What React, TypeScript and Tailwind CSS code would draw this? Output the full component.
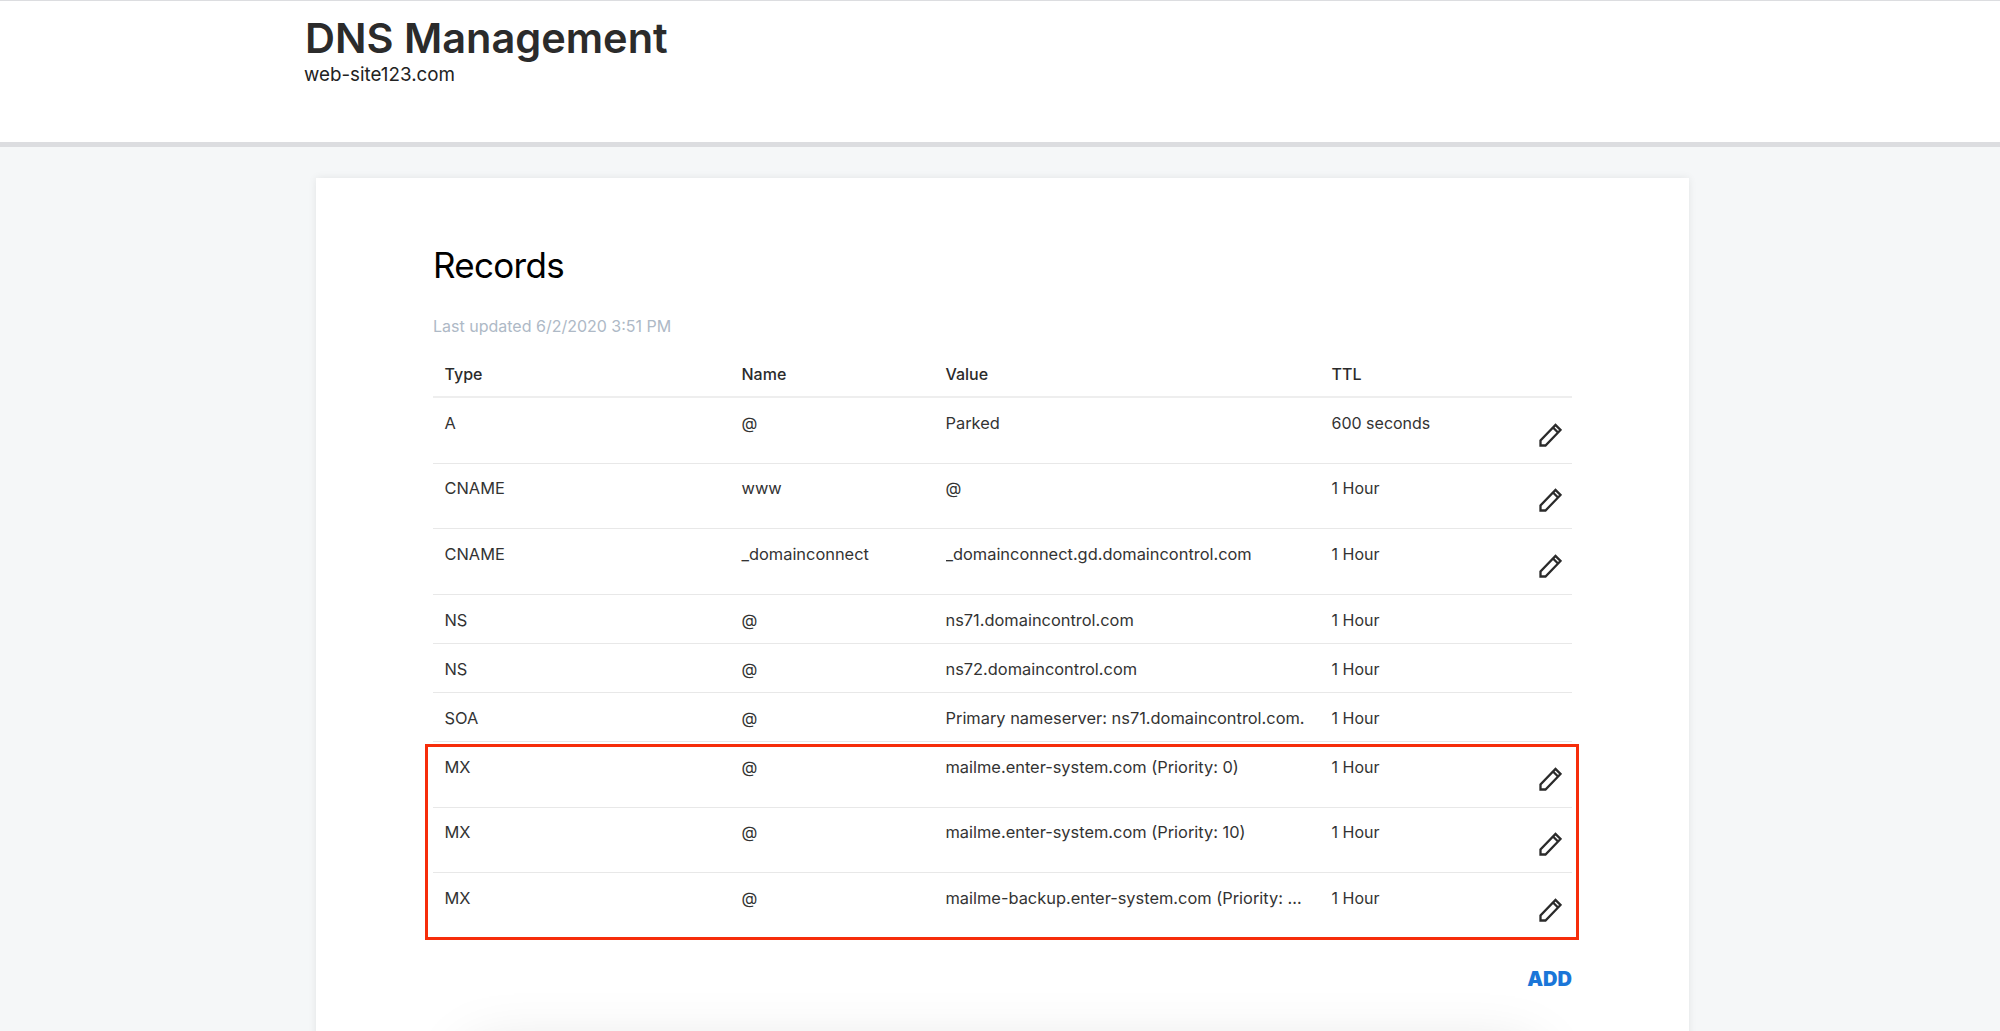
const font = "font-['Inter','Liberation_Sans',sans-serif]";

type Row = { type: string; name: string; value: string; ttl: string; edit?: boolean };

const topRows: Row[] = [
  { type: "A", name: "@", value: "Parked", ttl: "600 seconds", edit: true },
  { type: "CNAME", name: "www", value: "@", ttl: "1 Hour", edit: true },
  { type: "CNAME", name: "_domainconnect", value: "_domainconnect.gd.domaincontrol.com", ttl: "1 Hour", edit: true },
  { type: "NS", name: "@", value: "ns71.domaincontrol.com", ttl: "1 Hour" },
  { type: "NS", name: "@", value: "ns72.domaincontrol.com", ttl: "1 Hour" },
  { type: "SOA", name: "@", value: "Primary nameserver: ns71.domaincontrol.com.", ttl: "1 Hour" },
];

const mxRows: Row[] = [
  { type: "MX", name: "@", value: "mailme.enter-system.com (Priority: 0)", ttl: "1 Hour", edit: true },
  { type: "MX", name: "@", value: "mailme.enter-system.com (Priority: 10)", ttl: "1 Hour", edit: true },
  { type: "MX", name: "@", value: "mailme-backup.enter-system.com (Priority: 20)", ttl: "1 Hour", edit: true },
];

function Pencil() {
  return (
    <svg viewBox="0 0 24 24" className="w-6 h-6 text-[#2b2b2b]" fill="none" stroke="currentColor" strokeWidth="2.300" strokeLinejoin="miter">
      <path d="M2.500 22.500v-5L17.500 2l5 5L7.500 22.500z" />
      <path d="M15 4.500l5 5" />
    </svg>
  );
}

function RecordRow({ row }: { row: Row }) {
  return (
    <div
      className={`grid grid-cols-[297px_204px_386px_150px_1fr] pl-[11.500px] pt-[12.500px] border-b border-[#e8e8e8] text-[16.4px] leading-[24px] text-[#333] ${
        row.edit ? "h-[65.7px]" : "h-[49px]"
      }`}
    >
      <div>{row.type}</div>
      <div>{row.name}</div>
      <div className="pr-6 truncate">{row.value}</div>
      <div className="text-[16px]">{row.ttl}</div>
      {row.edit && (
        <div className="pt-3 pl-[56px]">
          <Pencil />
        </div>
      )}
    </div>
  );
}

export default function App() {
  return (
    <div className={`h-[1031px] overflow-hidden bg-[#f5f7f8] ${font}`}>
      <header className="h-[147px] bg-white border-t border-[#dcdde0] border-b-[5px] border-b-[#dcdde0] pl-[305px] pt-[12px]">
        <h1 className="text-[41.500px] leading-[50px] font-semibold text-[#2b2b2b]">DNS Management</h1>
        <p className="-ml-[1px] text-[18.800px] leading-[24px] text-[#222]">web-site123.com</p>
      </header>

      <main className="mt-[31px] ml-[316px] w-[1373px] h-[900px] bg-white shadow-[0_0_8px_rgba(0,0,0,0.08)] pl-[117px] pr-[117px] pt-[63px]">
        <h2 className="text-[35px] leading-[50px] tracking-[-0.7px] text-black -mt-px">Records</h2>
        <p className="mt-[24px] text-[16px] leading-[24px] text-[#aeb9c6]">Last updated 6/2/2020 3:51 PM</p>

        <div className="mt-[13px] grid grid-cols-[297px_204px_386px_1fr] pl-[11.500px] h-[47px] pt-[11px] border-b-2 border-[#eeeeee] text-[16px] leading-[24px] font-medium text-[#2b2b2b]">
          <div>Type</div>
          <div>Name</div>
          <div>Value</div>
          <div>TTL</div>
        </div>

        {topRows.map((row, i) => (
          <RecordRow key={i} row={row} />
        ))}

        <div className="relative">
          {mxRows.map((row, i) => (
            <RecordRow key={i} row={row} />
          ))}
          <div className="absolute -left-2 -right-[7px] top-[2px] bottom-[-1px] border-[3px] border-[#f62d0a] pointer-events-none" />
        </div>

        <div className="mt-7 text-right">
          <span className="text-[20px] leading-[24px] font-black text-[#1b76d8]">ADD</span>
        </div>

        <div className="mt-[60px] ml-[37px] mr-[38px] h-[200px] bg-white shadow-[0_0_60px_rgba(0,0,0,0.14)]" />
      </main>
    </div>
  );
}
